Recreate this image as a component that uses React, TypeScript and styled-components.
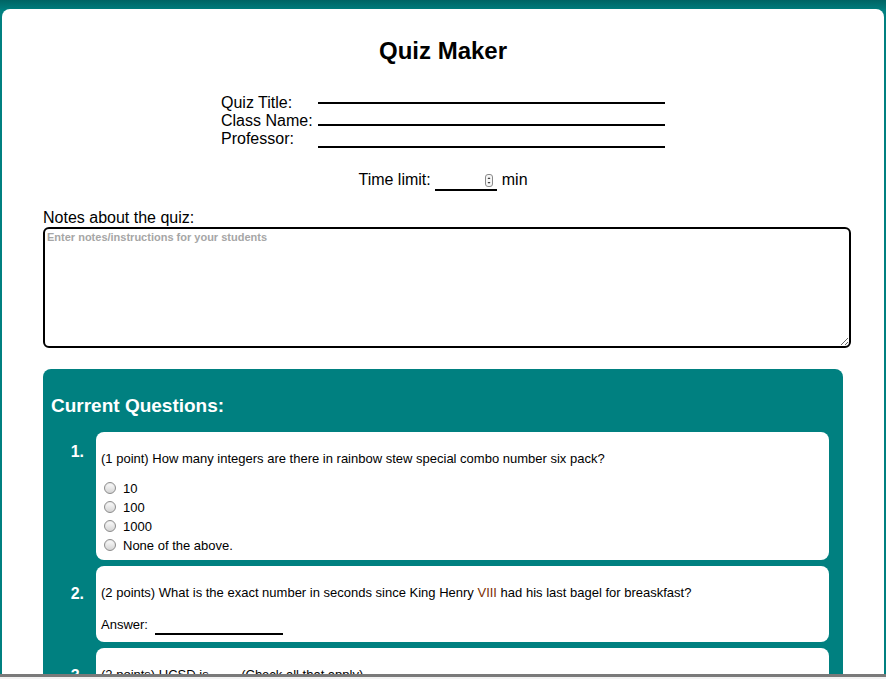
import React from "react";
import styled, { createGlobalStyle } from "styled-components";

const GlobalStyle = createGlobalStyle`
  html {
    background-color: #008080;
    background-image: linear-gradient(#006464, #007878 8px, #008080 10px);
    background-size: 100% 10px;
    background-repeat: no-repeat;
  }
  body {
    margin: 0;
    font-family: "Liberation Sans", Arial, Helvetica, sans-serif;
    color: #000;
  }
`;

const Page = styled.div`
  margin: 9px 2px 0 2px;
  background: #fff;
  border-radius: 8px 8px 0 0;
  padding: 28px 41px 60px;
`;

const Title = styled.h1`
  margin: 0;
  font-size: 24px;
  line-height: 28px;
  font-weight: bold;
  text-align: center;
`;

const HeaderGrid = styled.div`
  display: grid;
  grid-template-columns: 97px 347px;
  justify-content: center;
  margin-top: 17px;
`;

const LabelCol = styled.div`
  padding-top: 12px;
  font-size: 16px;
  line-height: 18px;
`;

const InputCol = styled.div`
  display: flex;
  flex-direction: column;
`;

const LineInput = styled.input`
  display: block;
  box-sizing: border-box;
  width: 100%;
  height: 22px;
  border: none;
  border-bottom: 2px solid #000;
  background: transparent;
  outline: none;
  padding: 0;
  font: 16px "Liberation Sans", Arial, sans-serif;
`;

const TimeRow = styled.div`
  display: flex;
  justify-content: center;
  align-items: baseline;
  margin-top: 23px;
  font-size: 16px;
  line-height: 18px;
`;

const TimeField = styled.span`
  display: inline-flex;
  align-items: center;
  width: 62px;
  box-sizing: border-box;
  border-bottom: 2px solid #000;
  margin: 0 5px 0 4px;
  padding-right: 4px;
`;

const NumberInput = styled.input`
  flex: 1;
  min-width: 0;
  height: 16px;
  border: none;
  padding: 0;
  outline: none;
  background: transparent;
  font: 13px "Liberation Sans", Arial, sans-serif;
`;

const Spinner = () => (
  <svg width="8" height="13" viewBox="0 0 8 13" style={{ display: "block", marginLeft: 2 }}>
    <rect x="0.5" y="0.5" width="7" height="12" rx="2.5" fill="#f6f6f6" stroke="#8a8a8a" />
    <path d="M2.5 5 L4 3.3 L5.5 5 Z" fill="#333" />
    <path d="M2.5 8 L4 9.7 L5.5 8 Z" fill="#333" />
  </svg>
);

const NotesLabel = styled.label`
  display: block;
  margin-top: 18px;
  font-size: 16px;
  line-height: 18px;
`;

const NotesArea = styled.textarea`
  display: block;
  width: 100%;
  height: 113px;
  margin: 0;
  padding: 2px;
  border: 2px solid #000;
  border-radius: 6px;
  outline: none;
  font: bold 11px "Liberation Sans", Arial, sans-serif;
  &::placeholder {
    color: #a6a6a6;
  }
`;

const Panel = styled.section`
  margin-top: 21px;
  background: #008080;
  border-radius: 8px 8px 0 0;
  padding: 25px 14px 40px 8px;
`;

const PanelTitle = styled.h2`
  margin: 0;
  font-size: 19px;
  line-height: 24px;
  font-weight: bold;
  color: #fff;
`;

const QuestionList = styled.div`
  display: flex;
  flex-direction: column;
  gap: 6px;
  margin-top: 14px;
`;

const QuestionRow = styled.div`
  display: grid;
  grid-template-columns: 45px 1fr;
`;

const Number = styled.div<{ $top: number }>`
  padding-top: ${(p) => p.$top}px;
  padding-right: 12px;
  text-align: right;
  color: #fff;
  font-size: 16px;
  line-height: 18px;
  font-weight: bold;
`;

const Card = styled.div`
  background: #fff;
  border-radius: 8px;
  padding: 5px;
`;

const QuestionText = styled.p`
  margin: 14px 0 12px;
  font-size: 13px;
  line-height: 16px;
`;

const Roman = styled.span`
  color: #7e2f00;
`;

const Options = styled.div`
  font-size: 13px;
  line-height: 19px;
`;

const Option = styled.div`
  display: flex;
  align-items: center;
  height: 19px;
`;

const Radio = styled.span<{ $square?: boolean }>`
  box-sizing: border-box;
  width: 12px;
  height: 12px;
  margin: 0 7px 0 3px;
  border: 1px solid #8c8c8c;
  border-radius: ${(p) => (p.$square ? "2px" : "50%")};
  background: linear-gradient(#fdfdfd, #d4d4d4);
  box-shadow: inset 0 1px 1px rgba(0, 0, 0, 0.08);
`;

const AnswerRow = styled.div`
  display: flex;
  align-items: baseline;
  font-size: 13px;
  line-height: 19px;
  padding: 2px 0 2px;
`;

const AnswerInput = styled.input`
  box-sizing: border-box;
  width: 128px;
  height: 19px;
  margin-left: 7px;
  padding: 0;
  border: none;
  border-bottom: 2px solid #000;
  outline: none;
  background: transparent;
  font: 13px "Liberation Sans", Arial, sans-serif;
`;

const WindowEdge = styled.div`
  position: fixed;
  left: 0;
  right: 0;
  bottom: 0;
  height: 2px;
  border-top: 3px solid #7a7a7a;
  background: #f2f2f2;
`;

type Q =
  | { kind: "radio" | "check"; top: number; text: React.ReactNode; options: string[] }
  | { kind: "answer"; top: number; text: React.ReactNode };

const questions: Q[] = [
  {
    kind: "radio",
    top: 11,
    text: "(1 point) How many integers are there in rainbow stew special combo number six pack?",
    options: ["10", "100", "1000", "None of the above."],
  },
  {
    kind: "answer",
    top: 19,
    text: (
      <>
        (2 points) What is the exact number in seconds since King Henry <Roman>VIII</Roman> had his last bagel for breaskfast?
      </>
    ),
  },
  {
    kind: "check",
    top: 19,
    text: "(2 points) UCSD is ___. (Check all that apply)",
    options: ["Awesome", "In San Diego", "A university", "All of the above."],
  },
];

export default function App() {
  return (
    <>
      <GlobalStyle />
      <Page>
        <Title>Quiz Maker</Title>
        <HeaderGrid>
          <LabelCol>
            <div>Quiz Title:</div>
            <div>Class Name:</div>
            <div>Professor:</div>
          </LabelCol>
          <InputCol>
            <LineInput aria-label="Quiz Title" />
            <LineInput aria-label="Class Name" />
            <LineInput aria-label="Professor" />
          </InputCol>
        </HeaderGrid>
        <TimeRow>
          <span>Time limit:</span>
          <TimeField>
            <NumberInput type="text" aria-label="Time limit" />
            <Spinner />
          </TimeField>
          <span>min</span>
        </TimeRow>
        <NotesLabel htmlFor="notes">Notes about the quiz:</NotesLabel>
        <NotesArea id="notes" placeholder="Enter notes/instructions for your students" />
        <Panel>
          <PanelTitle>Current Questions:</PanelTitle>
          <QuestionList>
            {questions.map((q, i) => (
              <QuestionRow key={i}>
                <Number $top={q.top}>{i + 1}.</Number>
                <Card>
                  <QuestionText>{q.text}</QuestionText>
                  {q.kind === "answer" ? (
                    <AnswerRow>
                      <span>Answer:</span>
                      <AnswerInput aria-label="Answer" />
                    </AnswerRow>
                  ) : (
                    <Options>
                      {q.options.map((o) => (
                        <Option key={o}>
                          <Radio $square={q.kind === "check"} />
                          {o}
                        </Option>
                      ))}
                    </Options>
                  )}
                </Card>
              </QuestionRow>
            ))}
          </QuestionList>
        </Panel>
      </Page>
      <WindowEdge />
    </>
  );
}
